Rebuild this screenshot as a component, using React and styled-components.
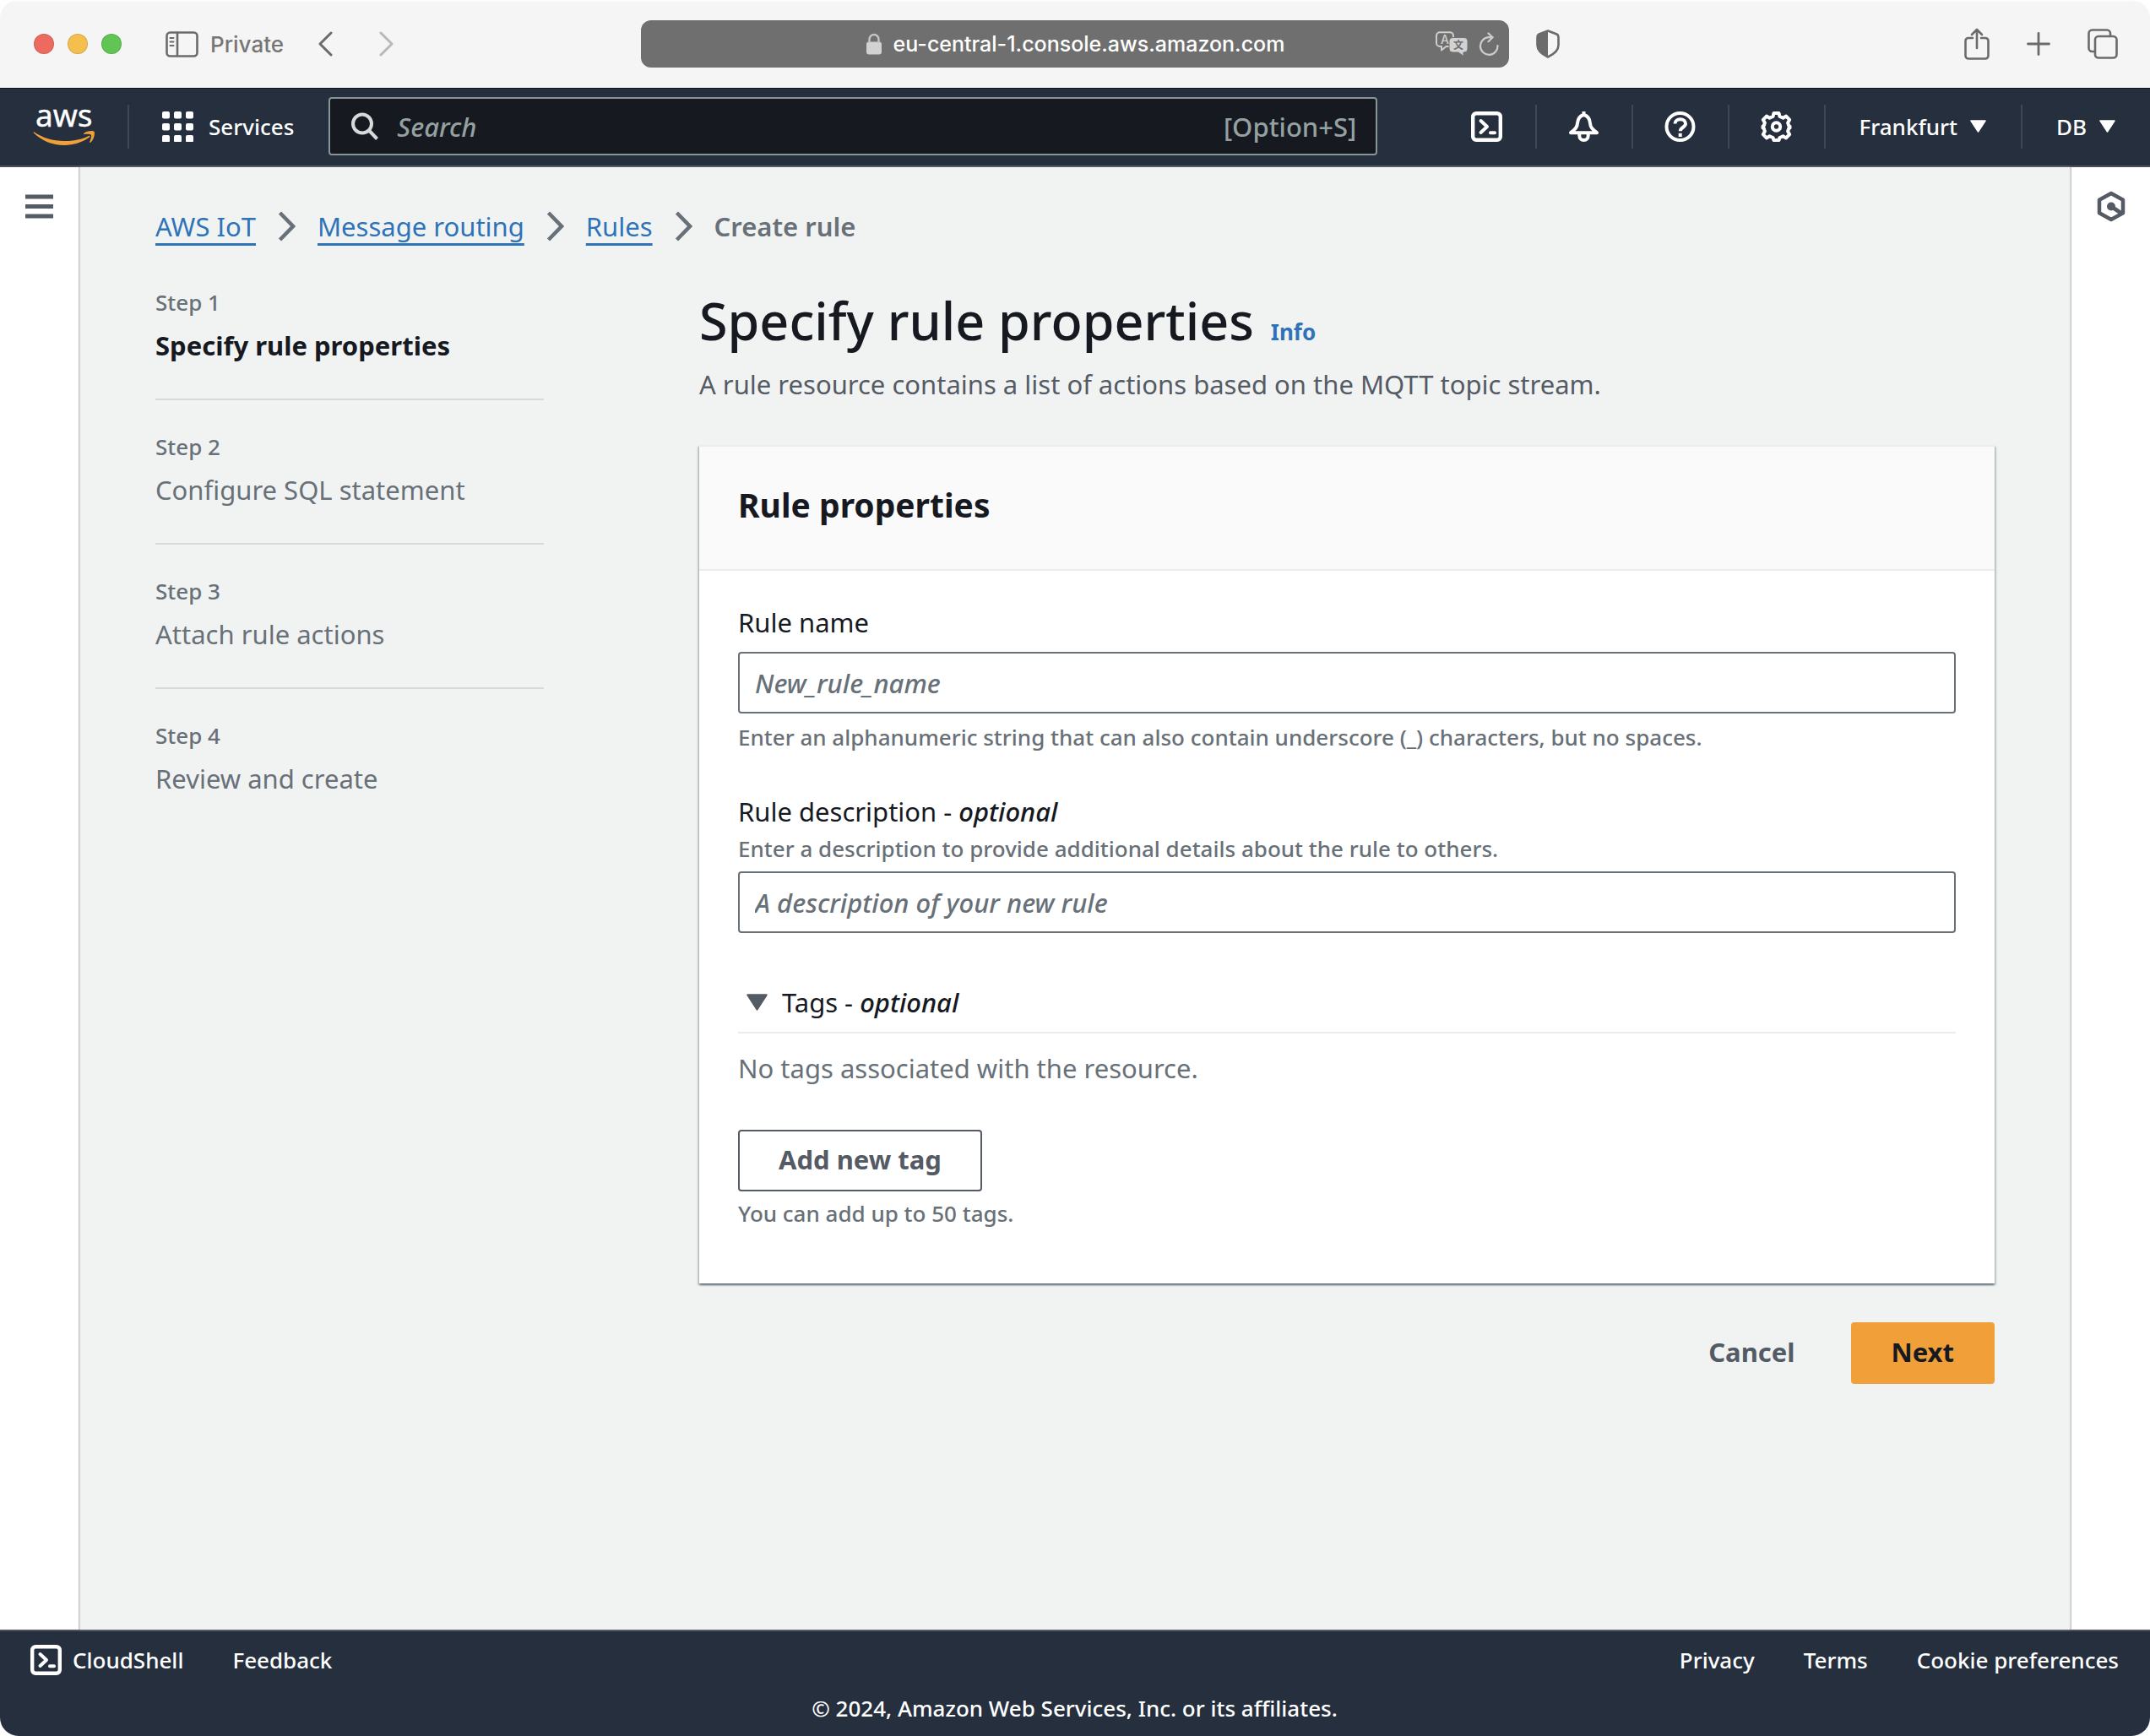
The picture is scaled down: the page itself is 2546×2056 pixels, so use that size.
import React, { useState } from "react";
import styled, { createGlobalStyle, css } from "styled-components";

const ember = '"Noto Sans", "Open Sans", sans-serif';
const system = 'Inter, "Liberation Sans", sans-serif';

const GlobalStyle = createGlobalStyle`
  *, *::before, *::after { box-sizing: border-box; }
  body { margin: 0; background: #ffffff; font-family: ${ember}; font-weight: 500; color: #16191f; }
  h1, h2, p, ol, ul { margin: 0; padding: 0; }
  ol, ul { list-style: none; }
  button, input { font: inherit; color: inherit; }
  svg { display: block; flex: none; }
`;

const bareButton = css`
  display: flex;
  align-items: center;
  padding: 0;
  border: 0;
  background: none;
  cursor: pointer;
`;

const bodyText = css`
  font-size: 31px;
  line-height: 44px;
  font-weight: 400;
`;

const smallText = css`
  font-size: 26px;
  line-height: 40px;
`;

const Window = styled.div`
  display: flex;
  flex-direction: column;
  min-height: 100vh;
  border-radius: 22px;
  overflow: hidden;
`;

/* Browser toolbar */

const Toolbar = styled.header`
  display: grid;
  grid-template-columns: 1fr minmax(0, 1028px) 1fr;
  align-items: center;
  height: 104px;
  background: #f5f5f5;
  box-shadow: inset 0 2px #fbfbfb;
  color: #6b6b6b;
  font-family: ${system};
  font-size: 26px;
`;

const ToolbarSide = styled.div`
  display: flex;
  align-items: center;
`;

const Lights = styled.div`
  display: flex;
  gap: 16px;
  padding: 0 52px 0 40px;
`;

const Light = styled.button`
  width: 24px;
  height: 24px;
  padding: 0;
  border: 1px solid rgba(0, 0, 0, 0.12);
  border-radius: 50%;
  background: ${(p) => p.$color};
`;

const SidebarToggle = styled.button`
  ${bareButton}
  gap: 14px;
  font-weight: 500;
  color: #767676;
`;

const History = styled.div`
  display: flex;
  gap: 55px;
  padding-left: 41px;
`;

const IconButton = styled.button`
  ${bareButton}
`;

const AddressBar = styled.div`
  display: flex;
  align-items: center;
  height: 56px;
  padding: 0 12px;
  border-radius: 12px;
  background: #6f6f6f;
  color: #ffffff;
`;

const Address = styled.button`
  ${bareButton}
  flex: 1;
  justify-content: center;
  gap: 14px;
  padding-left: 76px;
  font-size: 25px;
  font-weight: 500;
`;

const AddressTools = styled.div`
  display: flex;
  align-items: center;
  gap: 13px;
`;

const WindowActions = styled.div`
  display: flex;
  align-items: center;
  gap: 44px;
  margin-left: auto;
  padding-right: 38px;
`;

const ShieldSlot = styled.div`
  padding-left: 32px;
`;

/* Console navigation */

const Nav = styled.nav`
  display: flex;
  align-items: center;
  height: 94px;
  padding: 0 0 2px 38px;
  background: #262f3e;
  border-top: 1px solid #0b141c;
  border-bottom: 2px solid #545b64;
  color: #ffffff;
  font-size: 26px;
  font-weight: 500;
`;

const Logo = styled.a`
  display: block;
  padding-right: 37px;
`;

const Services = styled.button`
  ${bareButton}
  gap: 18px;
  height: 52px;
  padding: 0 41px 0 39px;
  border-left: 2px solid #414750;
`;

const SearchBox = styled.label`
  display: flex;
  flex: 1;
  align-items: center;
  gap: 22px;
  max-width: 1242px;
  height: 69px;
  padding: 0 23px 0 25px;
  border: 2px solid #879596;
  border-radius: 4px;
  background: #16191f;
  color: #95a1a1;
  font-size: 31px;
`;

const SearchInput = styled.input`
  flex: 1;
  min-width: 0;
  padding: 0;
  border: 0;
  outline: 0;
  background: none;
  &::placeholder { color: #95a1a1; font-style: italic; opacity: 1; }
`;

const NavActions = styled.div`
  display: flex;
  align-items: center;
  margin-left: auto;
`;

const NavCell = styled.button`
  ${bareButton}
  justify-content: center;
  width: 114px;
  height: 52px;
  & + & { border-left: 2px solid #414750; }
`;

const NavMenu = styled.button`
  ${bareButton}
  gap: 15px;
  height: 52px;
  padding: 0 41px 0 40px;
  border-left: 2px solid #414750;
`;

/* Page body */

const Body = styled.div`
  display: flex;
  flex: 1;
`;

const Rail = styled.aside`
  display: flex;
  flex: none;
  justify-content: center;
  align-items: flex-start;
  width: 93px;
  padding-top: 28px;
  background: #ffffff;
  z-index: 1;
  box-shadow: 0 0 2px 1px rgba(0, 28, 36, 0.3);
`;

const Main = styled.main`
  flex: 1;
  min-width: 0;
  padding: 48px 91px;
  background: #f1f3f3;
`;

const Crumbs = styled.ol`
  display: flex;
  align-items: center;
  margin-bottom: 48px;
  ${bodyText}
`;

const Crumb = styled.li`
  display: flex;
  align-items: center;
  gap: 26px;
  &:not(:last-child) { margin-right: 26px; }
`;

const CrumbLink = styled.a`
  color: #2e73b8;
  text-decoration: underline;
  text-decoration-thickness: 3px;
  text-decoration-skip-ink: none;
  text-underline-offset: 8px;
`;

const CrumbCurrent = styled.span`
  color: #687078;
  font-weight: 600;
`;

const Wizard = styled.div`
  display: grid;
  grid-template-columns: 460px minmax(0, 1fr);
  column-gap: 184px;
  align-items: start;
`;

const Step = styled.li`
  display: flex;
  flex-direction: column;
  gap: 9px;
  color: #687078;
  &:not(:last-child) {
    padding-bottom: 41px;
    margin-bottom: 35px;
    border-bottom: 2px solid #d5dbdb;
  }
`;

const StepNumber = styled.span`
  ${smallText}
`;

const StepTitle = styled.span`
  ${bodyText}
  ${(p) => p.$active && css`
    color: #16191f;
    font-weight: 700;
  `}
`;

const TitleRow = styled.div`
  display: flex;
  align-items: baseline;
  gap: 20px;
`;

const Title = styled.h1`
  font-size: 61px;
  line-height: 84px;
  font-weight: 500;
`;

const InfoLink = styled.a`
  color: #2e73b8;
  font-size: 26px;
  font-weight: 700;
  text-decoration: none;
`;

const Subtitle = styled.p`
  ${bodyText}
  margin-top: 11px;
  color: #545b64;
`;

const Card = styled.section`
  margin-top: 50px;
  border-top: 2px solid #eaeded;
  background: #ffffff;
  box-shadow:
    0 2px 2px rgba(0, 28, 36, 0.45),
    2px 2px 2px rgba(0, 28, 36, 0.15),
    -2px 2px 2px rgba(0, 28, 36, 0.15);
`;

const CardHeader = styled.div`
  padding: 39px 46px 46px;
  border-bottom: 2px solid #eaeded;
  background: #fafafa;
`;

const CardTitle = styled.h2`
  font-size: 39px;
  line-height: 60px;
  font-weight: 700;
`;

const CardBody = styled.form`
  padding: 39px 46px 63px;
`;

const Field = styled.div`
  display: flex;
  flex-direction: column;
  margin-bottom: ${(p) => p.$after}px;
`;

const Label = styled.label`
  ${bodyText}
  margin-bottom: 2px;
`;

const Optional = styled.i`
  font-weight: 500;
`;

const Hint = styled.p`
  ${smallText}
  color: #687078;
`;

const TextInput = styled.input`
  width: 100%;
  height: 73px;
  margin: ${(p) => p.$before}px 0 8px;
  padding: 0 18px;
  border: 2px solid #687078;
  border-radius: 4px;
  background: #ffffff;
  font-size: 31px;
  line-height: 44px;
  &::placeholder { color: #687078; font-style: italic; opacity: 1; }
`;

const Disclosure = styled.button`
  ${bareButton}
  ${bodyText}
  gap: 17px;
  width: 100%;
  padding: 0 0 13px 10px;
  border-bottom: 2px solid #eaeded;
  white-space: pre;
`;

const EmptyTags = styled.p`
  ${bodyText}
  margin: 19px 0 51px;
  color: #687078;
`;

const Button = styled.button`
  height: 73px;
  padding: 0 46px 4px;
  border: 2px solid ${(p) => (p.$kind === "normal" ? "#545b64" : "transparent")};
  border-radius: 4px;
  background: ${(p) => (p.$kind === "primary" ? "#f19f38" : p.$kind === "link" ? "transparent" : "#ffffff")};
  color: ${(p) => (p.$kind === "primary" ? "#16191f" : "#545b64")};
  font-size: 31px;
  line-height: 44px;
  font-weight: 700;
  cursor: pointer;
`;

const TagHint = styled(Hint)`
  margin-top: 6px;
`;

const FormActions = styled.div`
  display: flex;
  justify-content: flex-end;
  gap: 18px;
  margin-top: 46px;
`;

/* Footer */

const Footer = styled.footer`
  padding: 16px 37px 15px 36px;
  border-top: 2px solid #545b64;
  background: #262f3e;
  color: #ffffff;
  font-size: 26px;
  line-height: 36px;
  font-weight: 500;
`;

const FooterRow = styled.div`
  display: flex;
  align-items: center;
  margin-bottom: 21px;
`;

const FooterGroup = styled.div`
  display: flex;
  align-items: center;
  gap: 58px;
  &:last-child { margin-left: auto; }
`;

const FooterLink = styled.a`
  display: flex;
  align-items: center;
  gap: 13px;
  color: inherit;
  text-decoration: none;
`;

const Copyright = styled.p`
  text-align: center;
`;

/* Drawings */

const ShellIcon = () => (
  <svg width="37" height="36" viewBox="0 0 37 36" fill="none" stroke="#fff" strokeWidth="4" strokeLinecap="round" strokeLinejoin="round">
    <rect x="2.200" y="2.200" width="32.600" height="31.600" rx="4" strokeWidth="4.400" />
    <path d="M11.500 11l7.500 7-7.500 7" />
    <path d="M23 25.200h5" />
  </svg>
);

const BellIcon = () => (
  <svg width="37" height="36" viewBox="0 0 37 36" fill="none" stroke="#fff" strokeWidth="4" strokeLinejoin="round">
    <path d="M18.500 4C13 5.500 11.300 9.500 11 14c-.300 5-3 7.500-8 11.200h31c-5-3.700-7.700-6.200-8-11.200-.300-4.500-2-8.500-7.500-10z" />
    <path d="M13.300 26v2.800a5.200 5.200 0 0 0 10.400 0V26" />
    <path d="M18.500 0v4" />
  </svg>
);

const HelpIcon = () => (
  <svg width="37" height="36" viewBox="0 0 37 36" fill="none" stroke="#fff" strokeWidth="4">
    <circle cx="18.500" cy="18" r="16" />
    <path d="M12.500 14.500c0-7 12.500-7 12.500 0 0 4.500-6.200 4-6.200 8.800" />
    <path d="M18.700 25.800v4.200" />
  </svg>
);

const GearIcon = () => (
  <svg width="37" height="36" viewBox="0 0 37 36" fill="none" stroke="#fff" strokeWidth="4" strokeLinejoin="round">
    <path d="M15.500 2h6l1 4 4 1.700 3.600-2.100 4.100 4.200-2.100 3.600 1.200 3.600 1.200.500v2l-1.200.500-1.200 3.600 2.100 3.600-4.100 4.200-3.600-2.100-4 1.700-1 3h-6l-1-3-4-1.700-3.600 2.100-4.100-4.200 2.100-3.600-1.200-3.600-1.200-.500v-2l1.200-.500 1.200-3.600-2.100-3.600 4.100-4.200 3.600 2.100 4-1.700z" />
    <circle cx="18.500" cy="18" r="4.700" />
  </svg>
);

const Caret = ({ width = 19, height = 15, color = "#fff" }) => (
  <svg width={width} height={height} viewBox="0 0 19 15" preserveAspectRatio="none" fill={color} stroke={color} strokeWidth="1.500" strokeLinejoin="round">
    <path d="M1 1h17L9.500 14z" />
  </svg>
);

const GridIcon = () => (
  <svg width="37" height="36" viewBox="0 0 37 36" fill="#fff">
    {[0, 14, 28].map((y) => [0, 14, 28].map((x) => <rect key={`${x}-${y}`} x={x} y={y} width="9" height="8.500" rx="2" />))}
  </svg>
);

const AwsLogo = () => (
  <svg width="76" height="82" viewBox="0 -14 76 82">
    <text x="4" y="27" fontFamily="Noto Sans, sans-serif" fontSize="37" fontWeight="400" fill="#fff" stroke="#fff" strokeWidth="0.400">aws</text>
    <path d="M2.300 33.200C12 40 25 44 38 44c11 0 21-2 29-6 1.500-.600 2.300.500 1 1.600C60 45.500 49 49 38 49 24 49 11 43.500 2 34.500c-.700-.900-.300-1.600.300-1.300z" fill="#f19f38" />
    <path d="M61.500 34.800c3-2.800 10.500-3.500 12.200-1.800.900 2.200-.500 9.500-4.500 12.800-.700.500-1.300.100-1-.700 1-2.800 2.500-7 1.700-8.200s-5-1.200-8-.800c-.900.100-1.100-.700-.400-1.300z" fill="#f19f38" />
  </svg>
);

const CrumbChevron = () => (
  <svg width="21" height="36" viewBox="0 0 21 36" fill="none" stroke="#687078" strokeWidth="4.500">
    <path d="M2.500 2l15.500 16L2.500 34" />
  </svg>
);

const HistoryChevron = ({ forward }) => (
  <svg width="17" height="30" viewBox="0 0 17 30" fill="none" stroke={forward ? "#b9b9b9" : "#6b6b6b"} strokeWidth="3" strokeLinecap="round" strokeLinejoin="round">
    <path d={forward ? "M2 2l13 13L2 28" : "M15 2L2 15l13 13"} />
  </svg>
);

const SidebarIcon = () => (
  <svg width="39" height="31" viewBox="0 0 39 31" fill="none" stroke="#6b6b6b" strokeWidth="2.600" strokeLinecap="round">
    <rect x="1.500" y="1.500" width="36" height="28" rx="4" />
    <path d="M14 2v27" />
    <path d="M5.500 8h4M5.500 12.500h4M5.500 17h4" strokeWidth="2" />
  </svg>
);

const LockIcon = () => (
  <svg width="18" height="26" viewBox="0 0 18 26">
    <rect x="0" y="10.500" width="18" height="15" rx="3" fill="#d2d2d2" />
    <path d="M3.500 12V7.500a5.500 5.500 0 0 1 11 0V12" fill="none" stroke="#c4c4c4" strokeWidth="2.400" />
  </svg>
);

const TranslateIcon = () => (
  <svg width="38" height="30" viewBox="0 0 38 30">
    <path d="M5 1.200h12a4 4 0 0 1 4 4V14a4 4 0 0 1-4 4h-4.500L7 22.500V18H5a4 4 0 0 1-4-4V5.200a4 4 0 0 1 4-4z" fill="none" stroke="#cdcdcd" strokeWidth="2" strokeLinejoin="round" />
    <path d="M20 7.500h14a4 4 0 0 1 4 4V21a4 4 0 0 1-4 4h-1v4.500L27 25h-7a4 4 0 0 1-4-4v-9.500a4 4 0 0 1 4-4z" fill="#d2d2d2" stroke="#6f6f6f" strokeWidth="1" />
    <text x="6" y="15" fontFamily="Inter, sans-serif" fontSize="14" fontWeight="500" fill="#d2d2d2">A</text>
    <text x="21" y="21" fontFamily="Noto Sans CJK SC, sans-serif" fontSize="12" fontWeight="700" fill="#6f6f6f">文</text>
  </svg>
);

const ReloadIcon = () => (
  <svg width="24" height="28" viewBox="0 0 24 28" fill="none" stroke="#cdcdcd" strokeWidth="2.200" strokeLinecap="round" strokeLinejoin="round">
    <path d="M16.500 6.200H12A10.300 10.300 0 1 0 22.500 16" />
    <path d="M11.500 1.500l5 4.700-5 5" />
  </svg>
);

const ShieldIcon = () => (
  <svg width="28" height="34" viewBox="0 0 28 34">
    <path d="M14 1.500l10.500 4Q26.500 6.500 26.500 9v9.500c0 6-5 10.500-12.500 14C6.500 29 1.500 24.500 1.500 18.500V9q0-2.500 2-3.500z" fill="none" stroke="#6b6b6b" strokeWidth="2.600" strokeLinejoin="round" />
    <path d="M14 1.500v31C6.500 29 1.500 24.500 1.500 18.500V9q0-2.500 2-3.500z" fill="#6b6b6b" />
  </svg>
);

const ShareIcon = () => (
  <svg width="30" height="38" viewBox="0 0 30 38" fill="none" stroke="#6b6b6b" strokeWidth="2.600" strokeLinecap="round" strokeLinejoin="round">
    <path d="M10 12H5a3.500 3.500 0 0 0-3.500 3.500v17.500A3.500 3.500 0 0 0 5 36.500h20a3.500 3.500 0 0 0 3.500-3.500V15.500A3.500 3.500 0 0 0 25 12h-5" />
    <path d="M15 24V2M9 8l6-6 6 6" />
  </svg>
);

const PlusIcon = () => (
  <svg width="28" height="28" viewBox="0 0 28 28" stroke="#6b6b6b" strokeWidth="2.800" strokeLinecap="round">
    <path d="M14 1.500v25M1.500 14h25" />
  </svg>
);

const TabsIcon = () => (
  <svg width="36" height="36" viewBox="0 0 36 36" fill="none" stroke="#6b6b6b" strokeWidth="2.600" strokeLinejoin="round">
    <path d="M9 27H5.500a4 4 0 0 1-4-4V5.500a4 4 0 0 1 4-4H23a4 4 0 0 1 4 4V9" />
    <rect x="9" y="9" width="25.500" height="25.500" rx="4" />
  </svg>
);

const SearchIcon = () => (
  <svg width="32" height="33" viewBox="0 0 32 33" fill="none" stroke="#d5dbdb" strokeWidth="4">
    <circle cx="13" cy="13.500" r="11" />
    <path d="M21 21.500l9.500 10" />
  </svg>
);

const MenuIcon = () => (
  <svg width="34" height="36" viewBox="0 0 34 36" stroke="#545b64" strokeWidth="5">
    <path d="M0 7h33M0 18.500h33M0 30h33" />
  </svg>
);

const HexIcon = () => (
  <svg width="34" height="37" viewBox="0 0 34 37" fill="none" stroke="#545b64" strokeWidth="4.500">
    <path d="M17 3l14 7.700v15.600L17 34 3 26.300V10.700z" strokeLinejoin="round" />
    <circle cx="17" cy="18.500" r="5" fill="#545b64" stroke="none" />
    <path d="M17 18.500l12 8" strokeWidth="5" />
  </svg>
);

const crumbs = ["AWS IoT", "Message routing", "Rules"];
const steps = ["Specify rule properties", "Configure SQL statement", "Attach rule actions", "Review and create"];

const BrowserToolbar = () => (
  <Toolbar>
    <ToolbarSide>
      <Lights>
        <Light $color="#ec6a5e" aria-label="Close" />
        <Light $color="#f4bf4f" aria-label="Minimize" />
        <Light $color="#61c554" aria-label="Zoom" />
      </Lights>
      <SidebarToggle><SidebarIcon />Private</SidebarToggle>
      <History>
        <IconButton aria-label="Back"><HistoryChevron /></IconButton>
        <IconButton aria-label="Forward"><HistoryChevron forward /></IconButton>
      </History>
    </ToolbarSide>
    <AddressBar>
      <Address><LockIcon />eu-central-1.console.aws.amazon.com</Address>
      <AddressTools>
        <IconButton aria-label="Translate"><TranslateIcon /></IconButton>
        <IconButton aria-label="Reload"><ReloadIcon /></IconButton>
      </AddressTools>
    </AddressBar>
    <ToolbarSide>
      <ShieldSlot><IconButton aria-label="Privacy report"><ShieldIcon /></IconButton></ShieldSlot>
      <WindowActions>
        <IconButton aria-label="Share"><ShareIcon /></IconButton>
        <IconButton aria-label="New tab"><PlusIcon /></IconButton>
        <IconButton aria-label="Show tabs"><TabsIcon /></IconButton>
      </WindowActions>
    </ToolbarSide>
  </Toolbar>
);

const ConsoleNav = () => (
  <Nav>
    <Logo href="#home" aria-label="AWS"><AwsLogo /></Logo>
    <Services><GridIcon />Services</Services>
    <SearchBox>
      <SearchIcon />
      <SearchInput type="text" placeholder="Search" aria-label="Search" />
      <span>[Option+S]</span>
    </SearchBox>
    <NavActions>
      <NavCell aria-label="CloudShell"><ShellIcon /></NavCell>
      <NavCell aria-label="Notifications"><BellIcon /></NavCell>
      <NavCell aria-label="Help"><HelpIcon /></NavCell>
      <NavCell aria-label="Settings"><GearIcon /></NavCell>
      <NavMenu>Frankfurt<Caret /></NavMenu>
      <NavMenu>DB<Caret /></NavMenu>
    </NavActions>
  </Nav>
);

const RuleForm = () => {
  const [open, setOpen] = useState(true);
  return (
    <Card>
      <CardHeader><CardTitle>Rule properties</CardTitle></CardHeader>
      <CardBody onSubmit={(e) => e.preventDefault()}>
        <Field $after={46}>
          <Label htmlFor="rule-name">Rule name</Label>
          <TextInput id="rule-name" type="text" placeholder="New_rule_name" $before={11} />
          <Hint>Enter an alphanumeric string that can also contain underscore (_) characters, but no spaces.</Hint>
        </Field>
        <Field $after={52}>
          <Label htmlFor="rule-description">Rule description - <Optional>optional</Optional></Label>
          <Hint>Enter a description to provide additional details about the rule to others.</Hint>
          <TextInput id="rule-description" type="text" placeholder="A description of your new rule" $before={7} />
        </Field>
        <Disclosure type="button" aria-expanded={open} onClick={() => setOpen(!open)}>
          <Caret width={25} height={20} color="#545b64" />
          <span>Tags - <Optional>optional</Optional></span>
        </Disclosure>
        {open && (
          <>
            <EmptyTags>No tags associated with the resource.</EmptyTags>
            <Button type="button" $kind="normal">Add new tag</Button>
            <TagHint>You can add up to 50 tags.</TagHint>
          </>
        )}
      </CardBody>
    </Card>
  );
};

export default function App() {
  return (
    <>
      <GlobalStyle />
      <Window>
        <BrowserToolbar />
        <ConsoleNav />
        <Body>
          <Rail><IconButton aria-label="Open navigation"><MenuIcon /></IconButton></Rail>
          <Main>
            <Crumbs>
              {crumbs.map((name) => (
                <Crumb key={name}><CrumbLink href="#crumb">{name}</CrumbLink><CrumbChevron /></Crumb>
              ))}
              <Crumb><CrumbCurrent>Create rule</CrumbCurrent></Crumb>
            </Crumbs>
            <Wizard>
              <ol>
                {steps.map((name, i) => (
                  <Step key={name}>
                    <StepNumber>Step {i + 1}</StepNumber>
                    <StepTitle $active={i === 0}>{name}</StepTitle>
                  </Step>
                ))}
              </ol>
              <div>
                <TitleRow>
                  <Title>Specify rule properties</Title>
                  <InfoLink href="#info">Info</InfoLink>
                </TitleRow>
                <Subtitle>A rule resource contains a list of actions based on the MQTT topic stream.</Subtitle>
                <RuleForm />
                <FormActions>
                  <Button type="button" $kind="link">Cancel</Button>
                  <Button type="button" $kind="primary">Next</Button>
                </FormActions>
              </div>
            </Wizard>
          </Main>
          <Rail><IconButton aria-label="Open tools"><HexIcon /></IconButton></Rail>
        </Body>
        <Footer>
          <FooterRow>
            <FooterGroup>
              <FooterLink href="#cloudshell"><ShellIcon />CloudShell</FooterLink>
              <FooterLink href="#feedback">Feedback</FooterLink>
            </FooterGroup>
            <FooterGroup>
              <FooterLink href="#privacy">Privacy</FooterLink>
              <FooterLink href="#terms">Terms</FooterLink>
              <FooterLink href="#cookies">Cookie preferences</FooterLink>
            </FooterGroup>
          </FooterRow>
          <Copyright>© 2024, Amazon Web Services, Inc. or its affiliates.</Copyright>
        </Footer>
      </Window>
    </>
  );
}
